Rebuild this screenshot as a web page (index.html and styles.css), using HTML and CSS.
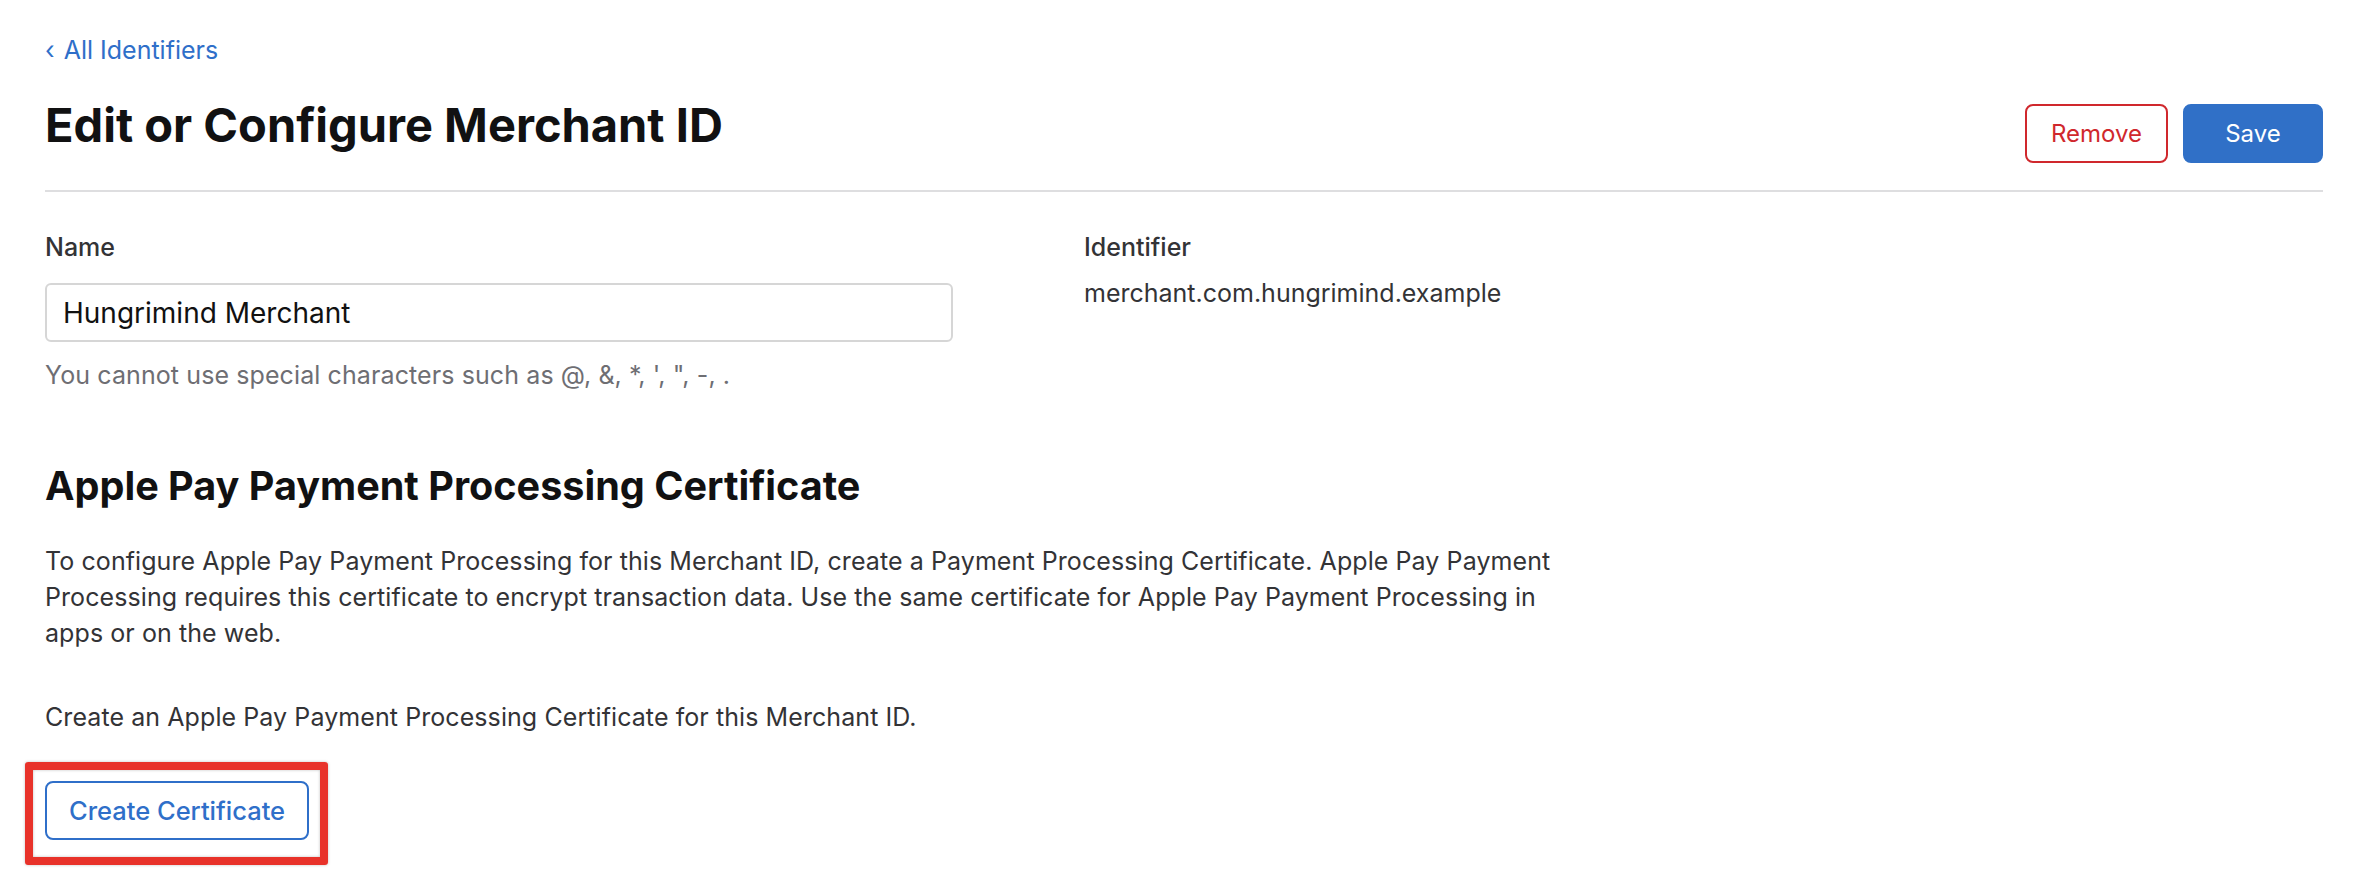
FILE: index.html
```html
<!DOCTYPE html>
<html lang="en">
<head>
<meta charset="utf-8">
<title>Edit or Configure Merchant ID</title>
<link rel="stylesheet" href="styles.css">
</head>
<body>
<main class="page">
  <a class="back" href="#"><span class="chev">‹</span> All Identifiers</a>
  <header class="head">
    <h1 class="title">Edit or Configure Merchant ID</h1>
    <div class="actions">
      <button class="btn btn-remove" type="button">Remove</button>
      <button class="btn btn-save" type="button">Save</button>
    </div>
  </header>
  <section class="fields">
    <div class="field">
      <label class="label" for="name">Name</label>
      <input class="input" id="name" type="text" value="Hungrimind Merchant">
      <p class="hint">You cannot use special characters such as @, &amp;, *, ', ", -, .</p>
    </div>
    <div class="field">
      <div class="label">Identifier</div>
      <div class="value">merchant.com.hungrimind.example</div>
    </div>
  </section>
  <section class="cert">
    <h2 class="subtitle">Apple Pay Payment Processing Certificate</h2>
    <p class="text">To configure Apple Pay Payment Processing for this Merchant ID, create a Payment Processing Certificate. Apple Pay Payment Processing requires this certificate to encrypt transaction data. Use the same certificate for Apple Pay Payment Processing in apps or on the web.</p>
    <p class="text text-create">Create an Apple Pay Payment Processing Certificate for this Merchant ID.</p>
    <div class="highlight">
      <button class="btn btn-outline" type="button">Create Certificate</button>
    </div>
  </section>
</main>
</body>
</html>
```
FILE: styles.css
```css
* { box-sizing: border-box; }
html, body { margin: 0; padding: 0; background: #fff; }
body {
  font-family: Inter, "Noto Sans", "Liberation Sans", sans-serif;
  color: #333336;
  font-size: 25px;
  line-height: 36px;
}
.page {
  padding: 32px 37px 60px 45px;
  min-height: 888px;
}
.back {
  display: inline-block;
  color: #2f6fc9;
  text-decoration: none;
  font-size: 25px;
  line-height: 36px;
}
.chev { margin-right: 2px; }
.head {
  display: flex;
  justify-content: space-between;
  align-items: flex-start;
  margin-top: 29px;
  padding-bottom: 27px;
  border-bottom: 2px solid #dedee0;
}
.title {
  margin: 0;
  font-size: 47px;
  line-height: 56px;
  font-weight: 700;
  color: #111112;
}
.actions {
  display: flex;
  gap: 15px;
  margin-top: 7px;
}
.btn {
  font-family: inherit;
  font-size: 24px;
  line-height: 30px;
  border-radius: 8px;
  cursor: pointer;
}
.btn-remove {
  width: 143px;
  height: 59px;
  background: #fff;
  color: #d0282d;
  border: 2px solid #d0282d;
}
.btn-save {
  width: 140px;
  height: 59px;
  background: #3070c7;
  color: #fff;
  border: 2px solid #3070c7;
}
.fields {
  display: grid;
  grid-template-columns: 908px 1fr;
  column-gap: 131px;
  margin-top: 37px;
}
.field { display: flex; flex-direction: column; align-items: flex-start; }
.label {
  font-weight: 500;
  color: #333336;
}
.input {
  margin-top: 18px;
  width: 908px;
  height: 59px;
  padding: 0 16px;
  font-family: inherit;
  font-size: 28px;
  color: #111;
  border: 2px solid #d6d6d6;
  border-radius: 6px;
  outline: none;
}
.hint {
  margin: 15px 0 0;
  color: #6e6e73;
  letter-spacing: 0.1px;
}
.value { margin-top: 10px; color: #333336; }
.cert { margin-top: 70px; }
.subtitle {
  margin: 0;
  font-size: 39.6px;
  line-height: 46px;
  font-weight: 700;
  color: #111112;
}
.text {
  margin: 34px 0 0;
  max-width: 1530px;
  letter-spacing: 0.08px;
}
.text-create { margin-top: 48px; }
.highlight {
  position: relative;
  display: inline-block;
  margin-top: 46px;
}
.highlight::after {
  content: "";
  position: absolute;
  left: -20px;
  right: -19px;
  top: -19px;
  bottom: -25px;
  border: 8px solid #e8322a;
  border-radius: 3px;
  box-shadow: 0 0 3px rgba(0,0,0,0.25), inset 0 0 3px rgba(0,0,0,0.25);
  pointer-events: none;
}
.btn-outline {
  display: block;
  width: 264px;
  height: 59px;
  background: #fff;
  color: #2f6fc9;
  border: 2px solid #2f6fc9;
  font-size: 25.5px;
  font-weight: 500;
}
```
